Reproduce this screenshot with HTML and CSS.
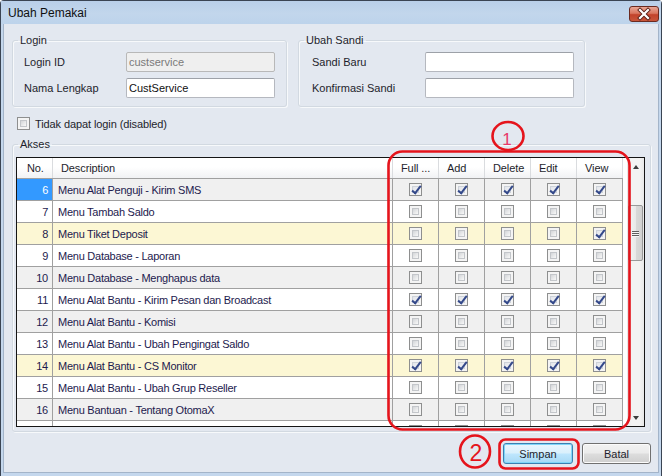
FILE: index.html
```html
<!DOCTYPE html>
<html>
<head>
<meta charset="utf-8">
<title>Ubah Pemakai</title>
<link rel="stylesheet" href="styles.css">
</head>
<body>
<div class="screen">
  <div class="window">
    <div class="titlebar">
      <span class="title">Ubah Pemakai</span>
      <span class="close">
        <svg width="30" height="16" viewBox="0 0 30 16">
          <path d="M11 4 L19 12 M19 4 L11 12" stroke="#5a2018" stroke-width="4" stroke-linecap="square"/>
          <path d="M11 4 L19 12 M19 4 L11 12" stroke="#fff" stroke-width="2.2" stroke-linecap="square"/>
        </svg>
      </span>
    </div>
    <div class="client">
      <div class="groups">
        <fieldset class="group login">
          <legend>Login</legend>
          <div class="field-row"><span class="lbl">Login ID</span><span class="input disabled">custservice</span></div>
          <div class="field-row"><span class="lbl">Nama Lengkap</span><span class="input">CustService</span></div>
        </fieldset>
        <fieldset class="group sandi">
          <legend>Ubah Sandi</legend>
          <div class="field-row"><span class="lbl">Sandi Baru</span><span class="input"></span></div>
          <div class="field-row"><span class="lbl">Konfirmasi Sandi</span><span class="input"></span></div>
        </fieldset>
      </div>
      <div class="chk-row"><span class="cb"></span><span>Tidak dapat login (disabled)</span></div>
      <fieldset class="group akses">
        <legend>Akses</legend>
        <div class="grid">
          <div class="grid-main">
            <div class="row head">
              <span class="c c-no">No.</span><span class="c c-desc">Description</span><span class="c c-chk">Full ...</span><span class="c c-chk">Add</span><span class="c c-chk">Delete</span><span class="c c-chk">Edit</span><span class="c c-chk">View</span>
            </div>
            <div class="row alt">
              <span class="c c-no sel">6</span><span class="c c-desc">Menu Alat Penguji - Kirim SMS</span><span class="c c-chk"><span class="cb on"></span></span><span class="c c-chk"><span class="cb on"></span></span><span class="c c-chk"><span class="cb on"></span></span><span class="c c-chk"><span class="cb on"></span></span><span class="c c-chk"><span class="cb on"></span></span>
            </div>
            <div class="row">
              <span class="c c-no">7</span><span class="c c-desc">Menu Tambah Saldo</span><span class="c c-chk"><span class="cb"></span></span><span class="c c-chk"><span class="cb"></span></span><span class="c c-chk"><span class="cb"></span></span><span class="c c-chk"><span class="cb"></span></span><span class="c c-chk"><span class="cb"></span></span>
            </div>
            <div class="row hl">
              <span class="c c-no">8</span><span class="c c-desc">Menu Tiket Deposit</span><span class="c c-chk"><span class="cb"></span></span><span class="c c-chk"><span class="cb"></span></span><span class="c c-chk"><span class="cb"></span></span><span class="c c-chk"><span class="cb"></span></span><span class="c c-chk"><span class="cb on"></span></span>
            </div>
            <div class="row">
              <span class="c c-no">9</span><span class="c c-desc">Menu Database - Laporan</span><span class="c c-chk"><span class="cb"></span></span><span class="c c-chk"><span class="cb"></span></span><span class="c c-chk"><span class="cb"></span></span><span class="c c-chk"><span class="cb"></span></span><span class="c c-chk"><span class="cb"></span></span>
            </div>
            <div class="row alt">
              <span class="c c-no">10</span><span class="c c-desc">Menu Database - Menghapus data</span><span class="c c-chk"><span class="cb"></span></span><span class="c c-chk"><span class="cb"></span></span><span class="c c-chk"><span class="cb"></span></span><span class="c c-chk"><span class="cb"></span></span><span class="c c-chk"><span class="cb"></span></span>
            </div>
            <div class="row">
              <span class="c c-no">11</span><span class="c c-desc">Menu Alat Bantu - Kirim Pesan dan Broadcast</span><span class="c c-chk"><span class="cb on"></span></span><span class="c c-chk"><span class="cb on"></span></span><span class="c c-chk"><span class="cb on"></span></span><span class="c c-chk"><span class="cb on"></span></span><span class="c c-chk"><span class="cb on"></span></span>
            </div>
            <div class="row alt">
              <span class="c c-no">12</span><span class="c c-desc">Menu Alat Bantu - Komisi</span><span class="c c-chk"><span class="cb"></span></span><span class="c c-chk"><span class="cb"></span></span><span class="c c-chk"><span class="cb"></span></span><span class="c c-chk"><span class="cb"></span></span><span class="c c-chk"><span class="cb"></span></span>
            </div>
            <div class="row">
              <span class="c c-no">13</span><span class="c c-desc">Menu Alat Bantu - Ubah Pengingat Saldo</span><span class="c c-chk"><span class="cb"></span></span><span class="c c-chk"><span class="cb"></span></span><span class="c c-chk"><span class="cb"></span></span><span class="c c-chk"><span class="cb"></span></span><span class="c c-chk"><span class="cb"></span></span>
            </div>
            <div class="row hl">
              <span class="c c-no">14</span><span class="c c-desc">Menu Alat Bantu - CS Monitor</span><span class="c c-chk"><span class="cb on"></span></span><span class="c c-chk"><span class="cb on"></span></span><span class="c c-chk"><span class="cb on"></span></span><span class="c c-chk"><span class="cb on"></span></span><span class="c c-chk"><span class="cb on"></span></span>
            </div>
            <div class="row">
              <span class="c c-no">15</span><span class="c c-desc">Menu Alat Bantu - Ubah Grup Reseller</span><span class="c c-chk"><span class="cb"></span></span><span class="c c-chk"><span class="cb"></span></span><span class="c c-chk"><span class="cb"></span></span><span class="c c-chk"><span class="cb"></span></span><span class="c c-chk"><span class="cb"></span></span>
            </div>
            <div class="row alt">
              <span class="c c-no">16</span><span class="c c-desc">Menu Bantuan - Tentang OtomaX</span><span class="c c-chk"><span class="cb"></span></span><span class="c c-chk"><span class="cb"></span></span><span class="c c-chk"><span class="cb"></span></span><span class="c c-chk"><span class="cb"></span></span><span class="c c-chk"><span class="cb"></span></span>
            </div>
            <div class="row">
              <span class="c c-no"></span><span class="c c-desc"></span><span class="c c-chk"><span class="cb"></span></span><span class="c c-chk"><span class="cb"></span></span><span class="c c-chk"><span class="cb"></span></span><span class="c c-chk"><span class="cb"></span></span><span class="c c-chk"><span class="cb"></span></span>
            </div>
          </div>
          <div class="scrollbar">
            <span class="sb-btn"><span class="arrow up"></span></span>
            <span class="sb-track">
              <span class="sb-thumb"><span class="grip"></span><span class="grip"></span><span class="grip"></span></span>
            </span>
            <span class="sb-btn"><span class="arrow down"></span></span>
          </div>
        </div>
      </fieldset>
      <div class="buttons">
        <span class="btn primary">Simpan</span>
        <span class="btn batal">Batal</span>
      </div>
    </div>
  </div>
  <svg class="annot" width="664" height="476" viewBox="0 0 664 476">
    <rect x="388.5" y="151.5" width="241" height="278" rx="14" ry="14" fill="none" stroke="#e5141c" stroke-width="2.6"/>
    <ellipse cx="508" cy="136" rx="15.5" ry="14" fill="none" stroke="#e5141c" stroke-width="2.6"/>
    <text x="507" y="145" text-anchor="middle" class="num1">1</text>
    <ellipse cx="475" cy="451.5" rx="15" ry="16" fill="none" stroke="#e5141c" stroke-width="2.6"/>
    <text x="476" y="461" text-anchor="middle" class="num2">2</text>
    <rect x="499.5" y="439.5" width="79" height="29" rx="6" ry="6" fill="none" stroke="#e5141c" stroke-width="2.6"/>
  </svg>
</div>
</body>
</html>
```
FILE: styles.css
```css
html, body {
  margin: 0;
  padding: 0;
  background: #ffffff;
}
body {
  font-family: "Liberation Sans", Arial, sans-serif;
  font-size: 11px;
  color: #1e1e2c;
}
.screen {
  position: relative;
  width: 664px;
  height: 476px;
  overflow: hidden;
}
.window {
  width: 662px;
  height: 476px;
  box-sizing: border-box;
  border: 1px solid #3a4453;
  border-bottom: 0;
  border-radius: 4px 4px 0 0;
  background: #c4d7ed;
  display: flex;
  flex-direction: column;
}
.titlebar {
  height: 23px;
  flex: none;
  display: flex;
  align-items: center;
  justify-content: space-between;
  padding: 0 2px 0 7px;
  background: linear-gradient(#b9cfe9, #c2d6ec 55%, #bdd3eb);
}
.title {
  font-size: 12px;
  color: #101010;
  margin-top: 1px;
}
.close {
  width: 30px;
  height: 16px;
  margin-top: 2px;
  box-sizing: border-box;
  border: 1px solid #6b2a20;
  border-radius: 3px;
  background: linear-gradient(#e9a796, #d9765f 45%, #c2432b 55%, #c8553a);
  display: flex;
  align-items: center;
  justify-content: center;
  overflow: hidden;
}
.close svg { display: block; margin: -1px; }
.client {
  flex: 1;
  margin: 0 2px 3px;
  border: 1px solid #a3b4c9;
  border-top: 0;
  background: #e3e8f0;
  padding: 10px 7px 0 8px;
  display: flex;
  flex-direction: column;
}
.groups {
  display: flex;
  gap: 11px;
}
.group {
  margin: 0;
  border: 1px solid #d2d9e1;
  border-radius: 3px;
  box-shadow: 1px 1px 0 #f7f9fb, inset 1px 1px 0 #f7f9fb;
  min-width: 0;
  box-sizing: border-box;
}
legend {
  padding: 0 2px;
  line-height: 13px;
  font-size: 11px;
  color: #1e1e2c;
}
.login {
  width: 275px;
  padding: 5px 11px 8px 11px;
}
.login legend { margin-left: -6px; }
.sandi {
  width: 287px;
  padding: 5px 10px 8px 13px;
}
.sandi legend { margin-left: -8px; }
.field-row {
  display: flex;
  align-items: center;
  height: 20px;
}
.field-row + .field-row { margin-top: 6px; }
.login .lbl { width: 102px; }
.sandi .lbl { width: 113px; }
.input {
  width: 149px;
  height: 20px;
  box-sizing: border-box;
  border: 1px solid #b5b8bf;
  border-top-color: #9da1a8;
  border-radius: 2px;
  background: #ffffff;
  padding: 0 2px;
  display: flex;
  align-items: center;
  color: #101010;
}
.input.disabled {
  background: #efefef;
  color: #7a7a7a;
  border-color: #b8b8b8;
}
.chk-row {
  display: flex;
  align-items: center;
  gap: 5px;
  height: 13px;
  margin: 10px 0 0 5px;
  letter-spacing: -0.1px;
}
.cb {
  width: 13px;
  height: 13px;
  box-sizing: border-box;
  border: 1px solid #8e8f8f;
  background: #f4f4f4;
  padding: 2px;
  display: inline-block;
  position: relative;
  flex: none;
}
.cb::before {
  content: "";
  display: block;
  width: 7px;
  height: 7px;
  box-sizing: border-box;
  border: 1px solid #c3c6ca;
  background: linear-gradient(135deg, #d3d5d8, #eaebec 60%, #f8f8f8);
}
.cb.on::before {
  border-color: #cdd2d9;
  background: linear-gradient(135deg, #e2e5ea, #f3f4f6);
}
.cb.on::after {
  content: "";
  position: absolute;
  left: 4px;
  top: 0px;
  width: 3px;
  height: 8px;
  border-right: 2px solid #34498a;
  border-bottom: 2px solid #34498a;
  transform: rotate(38deg);
}
.akses {
  margin-top: 8px;
  padding: 6px 5px 4px 3px;
}
.akses legend { margin-left: 2px; }
.grid {
  display: flex;
  height: 270px;
  box-sizing: border-box;
  border: 1px solid #151515;
  background: #ffffff;
}
.grid-main {
  width: 610px;
  overflow: hidden;
  background: #ffffff;
}
.row {
  display: flex;
  width: 606px;
  height: 22px;
  box-sizing: border-box;
  border-bottom: 1px solid #a0a0a0;
  color: #1d1a4e;
  background: #ffffff;
  letter-spacing: -0.25px;
}
.row.alt { background: #f0f0f0; }
.row.hl { background: #fcf7d4; }
.row.head {
  height: 21px;
  color: #1e1e2c;
  letter-spacing: -0.1px;
  background: linear-gradient(#ffffff, #ffffff 45%, #f1f2f4);
}
.c {
  box-sizing: border-box;
  border-right: 1px solid #a0a0a0;
  display: flex;
  align-items: center;
  white-space: nowrap;
  overflow: hidden;
}
.head .c { border-right-color: #dadcdf; }
.c-no {
  width: 36px;
  justify-content: flex-end;
  padding-right: 4px;
}
.head .c-no {
  justify-content: flex-start;
  padding: 0 0 0 10px;
}
.c-no.sel {
  background: #3399ff;
  color: #ffffff;
}
.c-desc {
  width: 340px;
  padding-left: 5px;
}
.head .c-desc { padding-left: 8px; }
.c-chk {
  width: 46px;
  justify-content: center;
}
.head .c-chk {
  justify-content: flex-start;
  padding-left: 8px;
}
.scrollbar {
  width: 17px;
  display: flex;
  flex-direction: column;
  background: linear-gradient(90deg, #e5e5e5, #f3f3f3 25%, #f3f3f3 75%, #e8e8e8);
}
.sb-btn {
  height: 17px;
  flex: none;
  display: flex;
  align-items: center;
  justify-content: center;
}
.arrow {
  width: 0;
  height: 0;
  border-left: 3.5px solid transparent;
  border-right: 3.5px solid transparent;
}
.arrow.up { border-bottom: 4px solid #3c3c3c; }
.arrow.down { border-top: 4px solid #3c3c3c; }
.sb-track {
  flex: 1;
  display: flex;
  flex-direction: column;
  align-items: center;
}
.sb-thumb {
  margin-top: 30px;
  width: 15px;
  height: 56px;
  box-sizing: border-box;
  border: 1px solid #999999;
  border-radius: 2px;
  background: linear-gradient(90deg, #f4f4f4, #e9e9e9 50%, #d9d9d9 51%, #d2d2d2);
  display: flex;
  flex-direction: column;
  align-items: center;
  justify-content: center;
  gap: 1px;
}
.grip {
  width: 7px;
  height: 1px;
  background: #5e5e5e;
  box-shadow: 0 1px 0 #f5f5f5;
}
.buttons {
  display: flex;
  justify-content: flex-end;
  gap: 9px;
  margin-top: 11px;
}
.btn {
  height: 21px;
  box-sizing: border-box;
  border: 1px solid #707070;
  border-radius: 3px;
  background: linear-gradient(#f2f2f2, #ebebeb 48%, #dddddd 52%, #cfcfcf);
  box-shadow: inset 0 0 0 1px #fbfbfb;
  display: flex;
  align-items: center;
  justify-content: center;
  color: #1e1e2c;
}
.btn.primary {
  width: 70px;
  border-color: #3c7fb1;
  background: linear-gradient(#eaf6fd, #d9f0fc 48%, #bee6fd 52%, #a7d9f5);
  box-shadow: inset 0 0 0 1px #7fd6f8;
}
.btn.batal { width: 69px; }
.annot {
  position: absolute;
  left: 0;
  top: 0;
  pointer-events: none;
}
.num1 {
  font-family: "Liberation Sans", Arial, sans-serif;
  font-size: 17px;
  fill: #e8386a;
}
.num2 {
  font-family: "Liberation Sans", Arial, sans-serif;
  font-size: 23px;
  fill: #e5141c;
}
```
